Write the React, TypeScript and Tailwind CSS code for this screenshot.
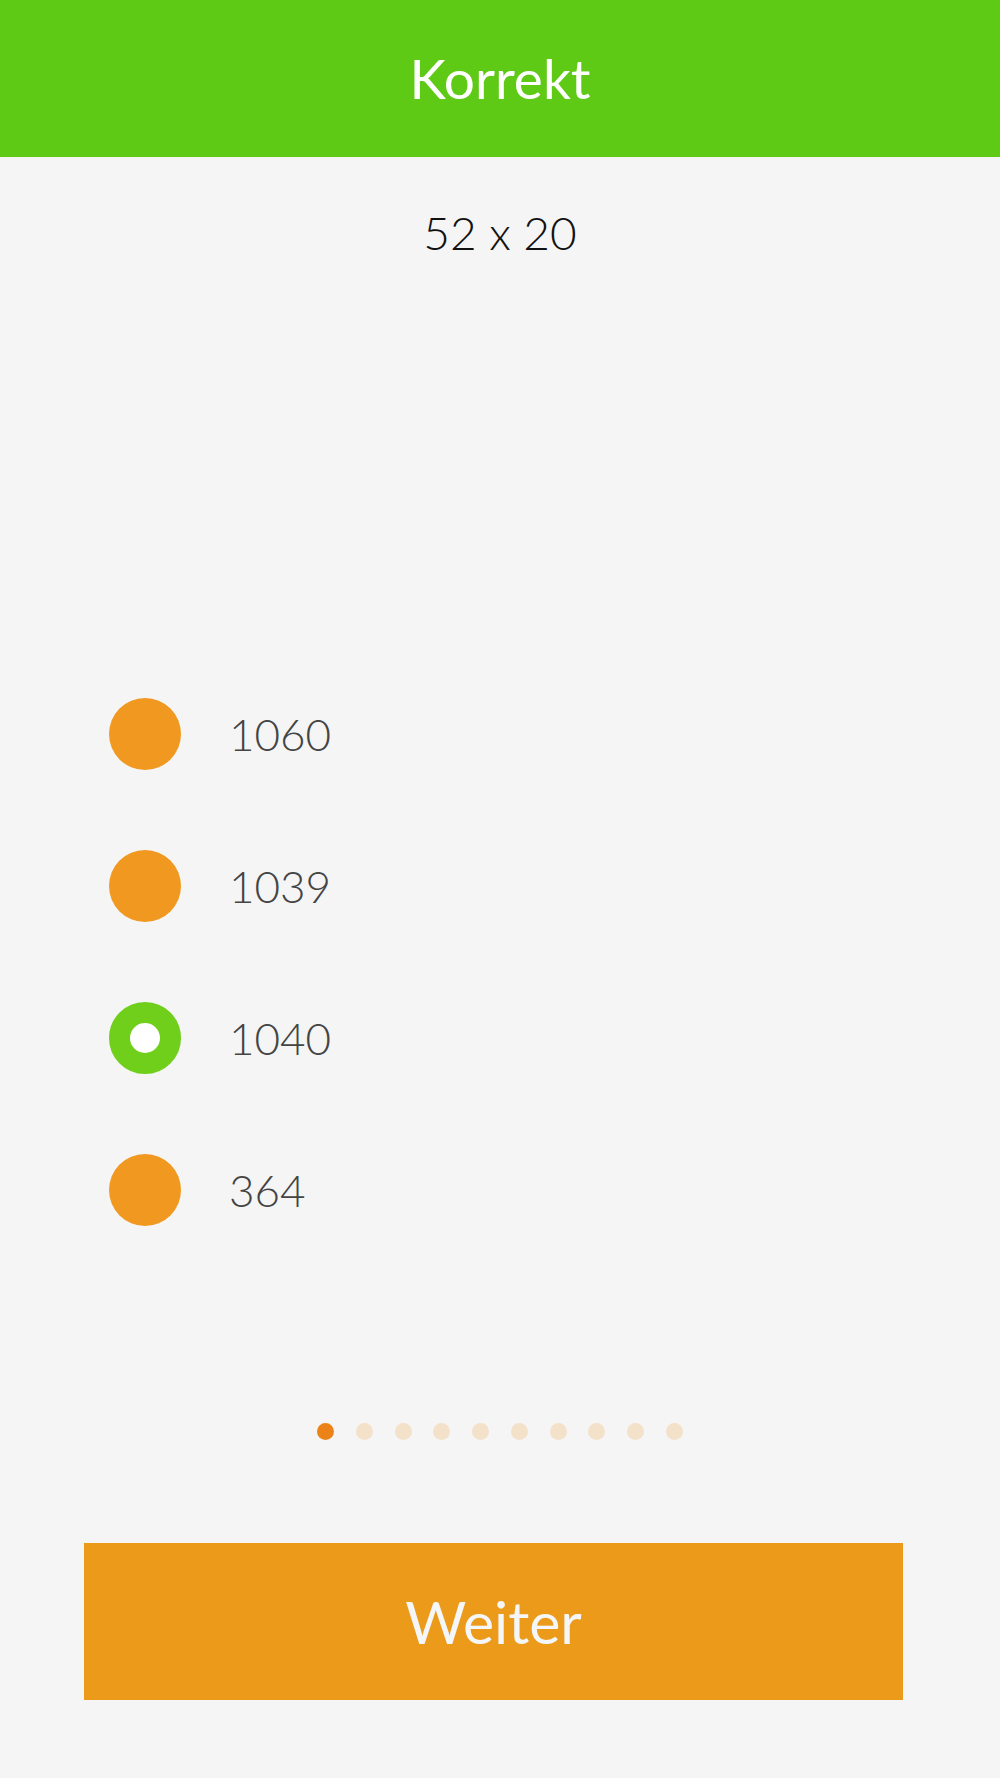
const options = [
  { value: "1060", correct: false },
  { value: "1039", correct: false },
  { value: "1040", correct: true },
  { value: "364", correct: false },
];

const dots = Array.from({ length: 10 }, (_, i) => i);

export default function App() {
  return (
    <div
      className="flex min-h-[1778px] w-full flex-col bg-[#f5f5f5]"
      style={{ fontFamily: "Lato, 'Open Sans', sans-serif" }}
    >
      {/* Header */}
      <div className="flex h-[157px] items-center justify-center bg-[#5fca16]">
        <span className="text-[55px] leading-none font-normal text-white">Korrekt</span>
      </div>

      {/* Question */}
      <div className="mt-[53px] text-center text-[46px] leading-none font-light text-[#111]">
        52 x 20
      </div>

      {/* Answers */}
      <div className="mt-[402px] flex flex-col">
        {options.map((opt) => (
          <div key={opt.value} className="flex h-[152px] items-center gap-[48px] pl-[109px]">
            {opt.correct ? (
              <div className="h-[72px] w-[72px] rounded-full border-[21px] border-[#6fcf1a] bg-white" />
            ) : (
              <div className="h-[72px] w-[72px] rounded-full bg-[#f0981f]" />
            )}
            <span className="text-[44px] leading-none font-light text-[#444]">{opt.value}</span>
          </div>
        ))}
      </div>

      {/* Progress dots */}
      <div className="mt-[157px] flex justify-center gap-[21.7px]">
        {dots.map((i) => (
          <div
            key={i}
            className={
              i === 0
                ? "h-[17px] w-[17px] rounded-full bg-[#ec8318]"
                : "h-[17px] w-[17px] rounded-full bg-[#f3e1ca]"
            }
          />
        ))}
      </div>

      {/* Button */}
      <button className="mt-[103px] ml-[84px] flex h-[157px] w-[819px] items-center justify-center bg-[#eb9a19]">
        <span className="text-[59px] leading-none font-normal text-[#f5f6f8]">Weiter</span>
      </button>
    </div>
  );
}
